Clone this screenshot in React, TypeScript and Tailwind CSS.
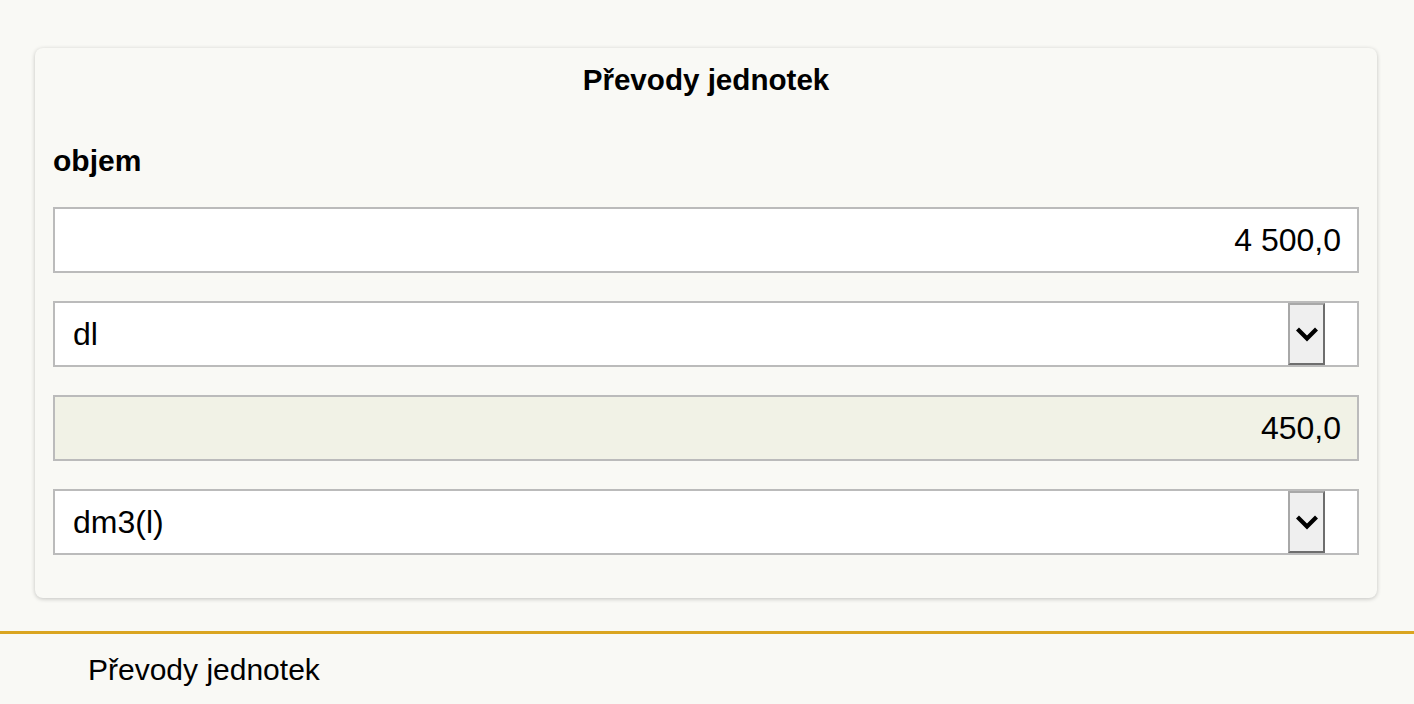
import React from 'react';

const Chevron: React.FC = () => (
  <svg width="24" height="16" viewBox="0 0 24 16" className="block">
    <path d="M2.5 3 L12 12.5 L21.5 3" fill="none" stroke="#000" strokeWidth="4.2" />
  </svg>
);

const NumberField: React.FC<{ value: string; readOnly?: boolean }> = ({ value, readOnly }) => (
  <div
    className={`h-[66px] border-2 border-[#bbbbbb] flex items-center justify-end pr-[16px] ${
      readOnly ? 'bg-[#f1f2e6]' : 'bg-white'
    }`}
  >
    {value}
  </div>
);

const UnitSelect: React.FC<{ value: string }> = ({ value }) => (
  <div className="h-[66px] border-2 border-[#bbbbbb] bg-white flex items-stretch">
    <div className="flex-1 flex items-center pl-[18px]">{value}</div>
    <div className="w-[37px] bg-[#efefef] border-2 border-t-[#a8a8a8] border-l-[#a8a8a8] border-r-[#6e6e6e] border-b-[#6e6e6e] flex items-center justify-center">
      <Chevron />
    </div>
    <div className="w-[32px]" />
  </div>
);

const App: React.FC = () => {
  return (
    <div
      className="min-h-screen bg-[#f9f9f5] text-black text-[30px]"
      style={{ fontFamily: '"Liberation Sans", Arial, sans-serif' }}
    >
      <div className="pt-[48px] pl-[35px] pr-[37px]">
        {/* Converter card */}
        <div className="rounded-[8px] bg-[#f9f9f5] shadow-[0_1px_4px_rgba(0,0,0,0.22)] px-[18px] pt-[15px] pb-[43px]">
          <h1 className="text-center font-bold text-[29.6px] leading-[34px]">Převody jednotek</h1>
          <h2 className="mt-[47px] font-bold leading-[34px]">objem</h2>

          <div className="mt-[29px] flex flex-col gap-[28px] text-[32px] leading-[36px]">
            <NumberField value="4 500,0" />
            <UnitSelect value="dl" />
            <NumberField value="450,0" readOnly />
            <UnitSelect value="dm3(l)" />
          </div>
        </div>
      </div>

      {/* Footer */}
      <footer className="mt-[33px] border-t-[3px] border-[#daa520] pt-[19px] pl-[88px]">
        <p className="leading-[34px]">Převody jednotek</p>
      </footer>
    </div>
  );
};

export default App;
